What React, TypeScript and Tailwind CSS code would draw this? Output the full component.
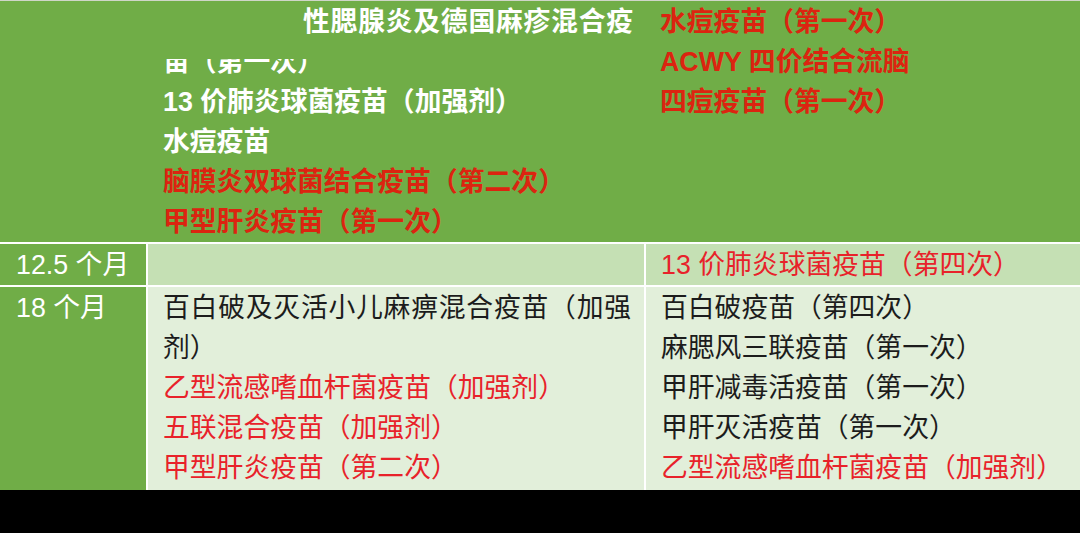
import React from "react";

const bold = "font-bold";
const redTop = "text-[#dc2410]";
const redLow = "text-[#e8222a]";
const dark = "text-[#1c1c1c]";

const L = ({ c, children }: { c: string; children: React.ReactNode }) => (
  <div className={`h-[40px] leading-[40px] whitespace-nowrap ${c}`}>{children}</div>
);

export default function App() {
  return (
    <div className="w-[1080px] h-[533px] bg-black overflow-hidden font-['Liberation_Sans','Noto_Sans_CJK_SC',sans-serif] text-[26.8px]">
      <div className="flex flex-col gap-[2px] bg-white border-t border-[#cfd6c8]">
        {/* green block */}
        <div className="grid grid-cols-[148px_498px_1fr] bg-[#70ad47] h-[241px] pt-[1px]">
          <div />
          <div className="pl-[15px] pr-[13px]">
            <div className={`h-[40px] leading-[40px] pl-[140px] [text-align-last:justify] text-white ${bold}`}>
              性腮腺炎及德国麻疹混合疫
            </div>
            <div className="h-[40px] pt-[17px]">
              <div className="h-[23px] overflow-hidden">
                <div className={`-mt-[17px] leading-[40px] whitespace-nowrap text-white ${bold}`}>苗（第一次）</div>
              </div>
            </div>
            <L c={`text-white ${bold}`}>13 价肺炎球菌疫苗（加强剂）</L>
            <L c={`text-white ${bold}`}>水痘疫苗</L>
            <L c={`${redTop} ${bold}`}>脑膜炎双球菌结合疫苗（第二次）</L>
            <L c={`${redTop} ${bold}`}>甲型肝炎疫苗（第一次）</L>
          </div>
          <div className="pl-[14px]">
            <L c={`${redTop} ${bold}`}>水痘疫苗（第一次）</L>
            <L c={`${redTop} ${bold}`}>ACWY 四价结合流脑</L>
            <L c={`${redTop} ${bold}`}>四痘疫苗（第一次）</L>
          </div>
        </div>

        {/* 12.5 months */}
        <div className="grid grid-cols-[146px_496px_1fr] gap-[2px] h-[41px]">
          <div className="bg-[#70ad47] pl-[16px] pt-[1px]">
            <L c="text-white">12.5 个月</L>
          </div>
          <div className="bg-[#c5e0b4]" />
          <div className="bg-[#c5e0b4] pl-[15px] pt-[1px]">
            <L c={redLow}>13 价肺炎球菌疫苗（第四次）</L>
          </div>
        </div>

        {/* 18 months */}
        <div className="grid grid-cols-[146px_496px_1fr] gap-[2px] h-[203px]">
          <div className="bg-[#70ad47] pl-[16px] pt-[1px]">
            <L c="text-white">18 个月</L>
          </div>
          <div className="bg-[#e2efda] pl-[15px] pr-[13px] pt-[1px]">
            <div className={`leading-[40px] text-justify ${dark}`}>百白破及灭活小儿麻痹混合疫苗（加强剂）</div>
            <L c={redLow}>乙型流感嗜血杆菌疫苗（加强剂）</L>
            <L c={redLow}>五联混合疫苗（加强剂）</L>
            <L c={redLow}>甲型肝炎疫苗（第二次）</L>
          </div>
          <div className="bg-[#e2efda] pl-[15px] pt-[1px]">
            <L c={dark}>百白破疫苗（第四次）</L>
            <L c={dark}>麻腮风三联疫苗（第一次）</L>
            <L c={dark}>甲肝减毒活疫苗（第一次）</L>
            <L c={dark}>甲肝灭活疫苗（第一次）</L>
            <L c={redLow}>乙型流感嗜血杆菌疫苗（加强剂）</L>
          </div>
        </div>
      </div>
    </div>
  );
}
